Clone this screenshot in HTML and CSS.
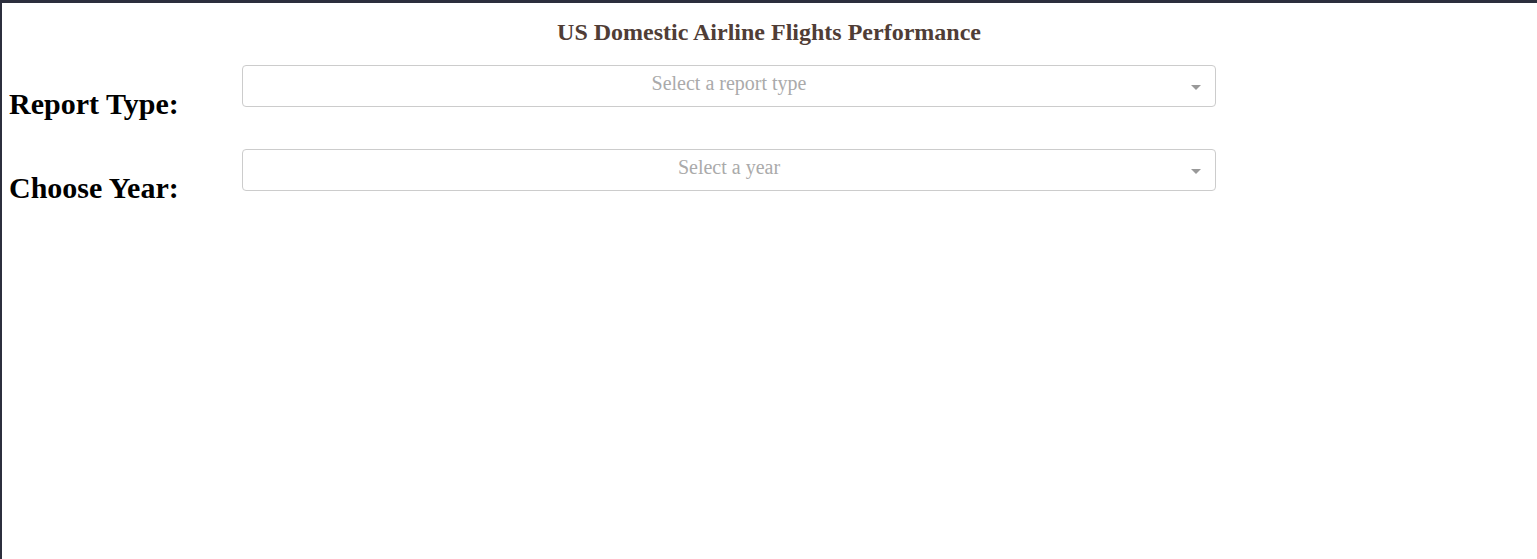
FILE: index.html
```html
<!DOCTYPE html>
<html>
<head>
<meta charset="utf-8">
<link rel="stylesheet" href="styles.css">
</head>
<body>
<div class="frame">
  <h1 class="title">US Domestic Airline Flights Performance</h1>
  <div class="row">
    <h2 class="label">Report Type:</h2>
    <div class="dropdown">
      <span class="placeholder">Select a report type</span>
      <span class="caret"></span>
    </div>
  </div>
  <div class="row">
    <h2 class="label">Choose Year:</h2>
    <div class="dropdown">
      <span class="placeholder">Select a year</span>
      <span class="caret"></span>
    </div>
  </div>
</div>
</body>
</html>
```
FILE: styles.css
```css
html, body {
  margin: 0;
  padding: 0;
  background: #fff;
}
body {
  font-family: "Liberation Serif", "Times New Roman", serif;
}
.frame {
  box-sizing: border-box;
  min-height: 100vh;
  border-top: 3px solid #2c2f3d;
  border-left: 2px solid #2c2f3d;
  padding: 0 8px 0 7px;
}
.title {
  margin: 0;
  padding-top: 15px;
  text-align: center;
  color: #503d36;
  font-size: 24px;
  line-height: 28px;
  font-weight: bold;
}
.row {
  display: flex;
  align-items: flex-start;
  margin-top: 19px;
}
.row + .row {
  margin-top: 0;
}
.label {
  margin: 22px 0 0 0;
  width: 233px;
  height: 62px;
  flex: none;
  font-size: 30px;
  line-height: 34px;
  font-weight: bold;
  color: #000;
}
.dropdown {
  box-sizing: border-box;
  width: 974px;
  height: 42px;
  border: 1px solid #ccc;
  border-radius: 4px;
  display: flex;
  align-items: center;
  justify-content: center;
  position: relative;
  padding-bottom: 5px;
}
.placeholder {
  color: #aaa;
  font-size: 20px;
}
.caret {
  position: absolute;
  right: 14px;
  top: 19px;
  width: 0;
  height: 0;
  border-left: 5px solid transparent;
  border-right: 5px solid transparent;
  border-top: 5px solid #999;
}
```
